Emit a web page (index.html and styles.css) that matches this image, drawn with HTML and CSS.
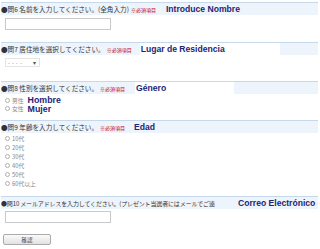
FILE: index.html
```html
<!DOCTYPE html>
<html>
<head>
<meta charset="utf-8">
<link rel="stylesheet" href="styles.css">
</head>
<body>
<div class="form">
  <section class="q q1">
    <div class="qh"><span class="qt">●問6 名前を入力してください。(全角入力)</span><span class="req">※必須項目</span><span class="es es1">Introduce Nombre</span></div>
    <div class="qb"><span class="txt"></span></div>
  </section>
  <section class="q q2">
    <div class="qh"><span class="qt">●問7 居住地を選択してください。</span><span class="req">※必須項目</span><span class="es es2">Lugar de Residencia</span></div>
    <div class="qb"><span class="sel"><span class="dash">- - - -</span><span class="arr">▾</span></span></div>
  </section>
  <section class="q q3">
    <div class="qh"><span class="qt">●問8 性別を選択してください。</span><span class="req">※必須項目</span><span class="es es3">Género</span></div>
    <div class="qb radios">
      <div class="ro"><span class="rb"></span><span class="rl">男性</span><span class="big">Hombre</span></div>
      <div class="ro"><span class="rb"></span><span class="rl">女性</span><span class="big">Mujer</span></div>
    </div>
  </section>
  <section class="q q4">
    <div class="qh"><span class="qt">●問9 年齢を入力してください。</span><span class="req">※必須項目</span><span class="es es4">Edad</span></div>
    <div class="qb ages">
      <div class="ro"><span class="rb"></span><span class="rl">10代</span></div>
      <div class="ro"><span class="rb"></span><span class="rl">20代</span></div>
      <div class="ro"><span class="rb"></span><span class="rl">30代</span></div>
      <div class="ro"><span class="rb"></span><span class="rl">40代</span></div>
      <div class="ro"><span class="rb"></span><span class="rl">50代</span></div>
      <div class="ro"><span class="rb"></span><span class="rl">60代以上</span></div>
    </div>
  </section>
  <section class="q q5">
    <div class="qh"><span class="qt qt5">●問10 メールアドレスを入力してください。(プレゼント当選者にはメールでご連</span><span class="es es5">Correo Electrónico</span></div>
    <div class="qb"><span class="txt"></span></div>
  </section>
  <div class="btnrow"><span class="btn">確認</span></div>
</div>
</body>
</html>
```
FILE: styles.css
```css
html, body {
  margin: 0;
  padding: 0;
  background: #fff;
}
body {
  font-family: "Liberation Sans", "Noto Sans CJK JP", sans-serif;
  width: 320px;
  height: 249px;
  overflow: hidden;
}
.form {
  padding: 2px 2px 0 1px;
}
.qh {
  display: flex;
  align-items: center;
  height: 12px;
  background: #edf4fb;
  border-top: 1px solid #c6d9ec;
  white-space: nowrap;
  overflow: hidden;
}
.qt {
  font-size: 6.6px;
  color: #333;
  font-family: "Noto Sans CJK JP", sans-serif;
}
.qt5 {
  font-size: 6px;
  letter-spacing: -0.15px;
  width: 236px;
  flex: none;
}
.req {
  font-size: 5px;
  color: #c40018;
  margin-left: 2px;
  font-family: "Noto Sans CJK JP", sans-serif;
}
.es {
  font-size: 8.6px;
  font-weight: bold;
  color: #1c2675;
  height: 12px;
  line-height: 12px;
}
.es1 { margin-left: 10px; }
.es2 { margin-left: 8px; background: #fff; padding-left: 1px; padding-right: 55px; }
.es3 { margin-left: 10px; background: #fff; padding-left: 1px; padding-right: 68px; }
.es4 { margin-left: 9px; }
.es5 { margin-left: 1px; }
.qb {
  padding-left: 4px;
}
.txt {
  display: block;
  width: 104px;
  height: 10px;
  border: 1px solid #c9c9c9;
  background: #fff;
}
.q1 .qb { padding-top: 3px; }
.q1 { margin-bottom: 12px; }
.q2 .qb { padding-top: 3px; }
.q2 { margin-bottom: 14px; }
.sel {
  display: flex;
  align-items: center;
  justify-content: space-between;
  height: 9px;
  border: 1px solid #e4e4e4;
  padding: 0 3px 0 2px;
  box-sizing: border-box;
  width: 35px;
}
.dash { font-size: 5px; color: #888; letter-spacing: 0.5px; }
.arr { font-size: 6px; color: #555; }
.radios { padding-top: 2px; }
.q3 { margin-bottom: 7px; }
.ro {
  display: flex;
  align-items: center;
  height: 8.5px;
}
.rb {
  width: 3px;
  height: 3px;
  border: 1px solid #b0b0b0;
  border-radius: 50%;
  margin-right: 2px;
  flex: none;
}
.rl {
  font-size: 5.8px;
  color: #888;
  font-family: "Noto Sans CJK JP", sans-serif;
}
.big {
  font-size: 8.8px;
  line-height: 8.5px;
  font-weight: bold;
  color: #1c2675;
  margin-left: 4px;
}
.ages { padding-top: 1px; }
.ages .ro { height: 9px; }
.q4 { margin-bottom: 8px; }
.q5 .qb { padding-top: 2px; }
.btnrow { padding: 11px 0 0 2px; }
.btn {
  display: flex;
  align-items: center;
  justify-content: center;
  width: 46px;
  height: 9px;
  border: 1px solid #aaa;
  border-radius: 2px;
  background: linear-gradient(#fafafa, #e2e2e2);
  font-size: 5.5px;
  color: #444;
  font-family: "Noto Sans CJK JP", sans-serif;
}
```
